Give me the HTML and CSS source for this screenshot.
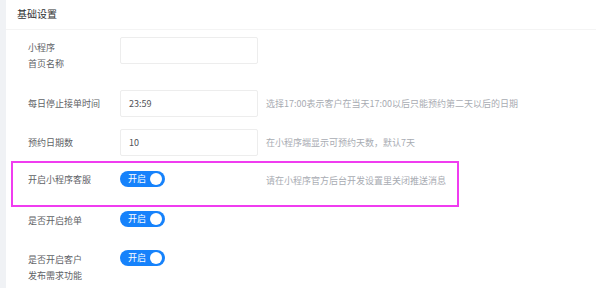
FILE: index.html
```html
<!DOCTYPE html>
<html lang="zh">
<head>
<meta charset="utf-8">
<link rel="stylesheet" href="styles.css">
</head>
<body>
<div class="page">
  <div class="sidebar"></div>
  <div class="card">
    <div class="card-header">基础设置</div>
    <div class="form">
      <div class="row row-name">
        <div class="label label-top">小程序<br>首页名称</div>
        <div class="input"></div>
      </div>
      <div class="row row-time">
        <div class="label">每日停止接单时间</div>
        <div class="input">23:59</div>
        <div class="hint">选择17:00表示客户在当天17:00以后只能预约第二天以后的日期</div>
      </div>
      <div class="row row-days">
        <div class="label">预约日期数</div>
        <div class="input">10</div>
        <div class="hint">在小程序端显示可预约天数，默认7天</div>
      </div>
      <div class="row row-service">
        <div class="label label-sw">开启小程序客服</div>
        <div class="switch"><span class="sw-text">开启</span><span class="knob"></span></div>
        <div class="hint hint-sw">请在小程序官方后台开发设置里关闭推送消息</div>
      </div>
      <div class="row row-grab">
        <div class="label label-sw">是否开启抢单</div>
        <div class="switch"><span class="sw-text">开启</span><span class="knob"></span></div>
      </div>
      <div class="row row-demand">
        <div class="label label-sw">是否开启客户<br>发布需求功能</div>
        <div class="switch"><span class="sw-text">开启</span><span class="knob"></span></div>
      </div>
    </div>
  </div>
</div>
</body>
</html>
```
FILE: styles.css
```css
* { box-sizing: border-box; }
html, body { margin: 0; padding: 0; background: #fff; }
body {
  font-family: "Noto Sans CJK SC", "Noto Sans", "Liberation Sans", sans-serif;
  font-size: 9px;
  color: #606266;
}
.page { display: flex; height: 288px; width: 596px; overflow: hidden; }
.sidebar { width: 6px; flex: none; background: #f0f2f5; }
.card { flex: 1; background: #fff; }
.card-header {
  height: 30px;
  padding-left: 11px;
  font-size: 10px;
  line-height: 27px;
  color: #303133;
  border-bottom: 1px solid #f4f4f4;
}
.form { padding-top: 7px; }
.row { display: flex; align-items: flex-start; padding-left: 22px; }
.label { width: 92px; flex: none; line-height: 16px; color: #606266; }
.label-top { padding-top: 3px; }
.input {
  width: 138px;
  height: 27px;
  flex: none;
  border: 1px solid #ededed;
  border-radius: 2px;
  padding-left: 8px;
  line-height: 25px;
  color: #505257;
}
.row-time .label, .row-days .label { line-height: 27px; }
.hint { margin-left: 8px; line-height: 27px; color: #a8abb2; }
.row-name { margin-bottom: 18px; }
.row-time { margin-bottom: 12px; }
.row-days { margin-bottom: 5px; }
.row-service {
  margin-left: 5px;
  width: 448px;
  border: 2px solid #f03cf0;
  padding: 8px 0 16px 15px;
}
.hint-sw { margin-left: 101px; line-height: 16px; padding-top: 2px; }
.label-sw { padding-top: 1px; }
.row-grab { margin-top: 4px; margin-bottom: 21px; }
.row-grab .label-sw, .row-demand .label-sw { padding-top: 2px; }
.switch {
  width: 45px;
  height: 16px;
  flex: none;
  border-radius: 8px;
  background: #1682fb;
  display: flex;
  align-items: center;
  padding: 0 3px 0 8px;
}
.sw-text { color: #fff; font-size: 9px; line-height: 16px; flex: 1; }
.knob { width: 12px; height: 12px; border-radius: 50%; background: #fff; flex: none; }
```
